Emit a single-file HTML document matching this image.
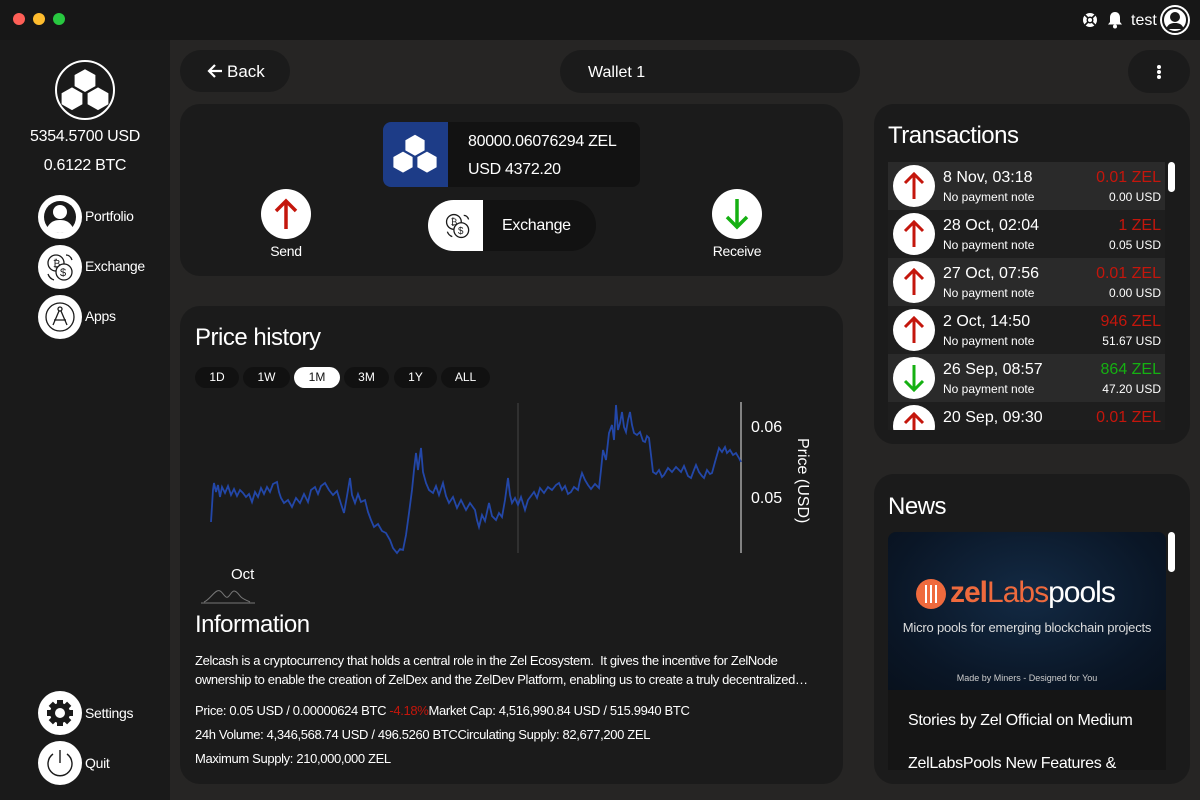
<!DOCTYPE html>
<html><head><meta charset="utf-8"><style>
*{box-sizing:border-box;margin:0;padding:0}
body{width:1200px;height:800px;background:#262524;font-family:"Liberation Sans",Arial,sans-serif;color:#fff;position:relative;overflow:hidden}
.abs{position:absolute}
.card{position:absolute;background:#1b1b1b;border-radius:20px}
.circ{position:absolute;border-radius:50%;background:#fff}
.t14{font-size:14px;letter-spacing:-0.3px}
.info{font-size:13px;letter-spacing:-0.35px;white-space:nowrap}
</style></head><body>
<!-- titlebar -->
<div class="abs" style="left:0;top:0;width:1200px;height:40px;background:#171717"></div>
<div class="circ" style="left:13px;top:13px;width:12px;height:12px;background:#fe5f57"></div>
<div class="circ" style="left:33px;top:13px;width:12px;height:12px;background:#febc2e"></div>
<div class="circ" style="left:53px;top:13px;width:12px;height:12px;background:#28c840"></div>
<svg class="abs" style="left:1082px;top:12px" width="16" height="16" viewBox="0 0 16 16"><circle cx="8" cy="8" r="7" fill="#fff"/><circle cx="8" cy="8" r="3.5" fill="#171717"/><circle cx="8" cy="8" r="2" fill="#fff"/><path d="M3 3l3 3M13 3l-3 3M3 13l3-3M13 13l-3-3" stroke="#171717" stroke-width="1.6"/></svg>
<svg class="abs" style="left:1107px;top:11px" width="16" height="18" viewBox="0 0 16 18"><path d="M8 1c-3 0-5 2.3-5 5.5V11L1 13.5h14L13 11V6.5C13 3.3 11 1 8 1z" fill="#fff"/><circle cx="8" cy="15.5" r="2" fill="#fff"/></svg>
<div class="abs" style="left:1131px;top:12px;font-size:16px">test</div>
<svg class="abs" style="left:1160px;top:5px" width="30" height="30" viewBox="0 0 30 30"><circle cx="15" cy="15" r="15" fill="#fff"/><circle cx="15" cy="15" r="12" fill="none" stroke="#171717" stroke-width="2"/><circle cx="15" cy="12" r="5" fill="#171717"/><path d="M6 24c2-5 5-6 9-6s7 1 9 6" fill="#171717"/></svg>

<!-- sidebar -->
<div class="abs" style="left:0;top:40px;width:170px;height:760px;background:#1a1a1a"></div>
<svg class="abs" style="left:55px;top:60px" width="60" height="60" viewBox="0 0 60 60"><circle cx="30" cy="30" r="29" fill="#1a1a1a" stroke="#fff" stroke-width="2"/>
<g fill="#fff" transform="translate(30 30) scale(1.3) translate(-30 -29)"><polygon points="30,13 38,17.5 38,26 30,30.5 22,26 22,17.5"/><polygon points="20,27 28,31.5 28,40 20,44.5 12,40 12,31.5"/><polygon points="40,27 48,31.5 48,40 40,44.5 32,40 32,31.5"/></g></svg>
<div class="abs" style="left:0;width:170px;top:128px;text-align:center;font-size:16px;letter-spacing:-0.3px">5354.5700 USD</div>
<div class="abs" style="left:0;width:170px;top:157px;text-align:center;font-size:16px;letter-spacing:-0.3px">0.6122 BTC</div>

<svg class="abs" style="left:38px;top:195px" width="44" height="44" viewBox="0 0 44 44"><circle cx="22" cy="22" r="22" fill="#fff"/><circle cx="22" cy="22" r="16" fill="#1a1a1a"/><circle cx="22" cy="17" r="7" fill="#fff"/><path d="M9 33c3-6 7-8 13-8s10 2 13 8c-3 3-8 5-13 5s-10-2-13-5z" fill="#fff"/></svg>
<div class="abs t14" style="left:85px;top:208px">Portfolio</div>
<svg class="abs" style="left:38px;top:245px" width="44" height="44" viewBox="0 0 44 44"><circle cx="22" cy="22" r="22" fill="#fff"/><g fill="none" stroke="#1a1a1a" stroke-width="1.3"><circle cx="18" cy="18" r="8"/><circle cx="26" cy="27" r="8" fill="#fff"/><path d="M28 10c3 0 5 2 6 5M10 29c1 3 3 5 6 6"/></g><text x="15" y="22" font-size="10" fill="#1a1a1a" font-family="Liberation Sans">₿</text><text x="22" y="31" font-size="11" fill="#1a1a1a" font-family="Liberation Sans">$</text></svg>
<div class="abs t14" style="left:85px;top:258px">Exchange</div>
<svg class="abs" style="left:38px;top:295px" width="44" height="44" viewBox="0 0 44 44"><circle cx="22" cy="22" r="22" fill="#fff"/><circle cx="22" cy="22" r="14" fill="none" stroke="#1a1a1a" stroke-width="1.3"/><g stroke="#1a1a1a" stroke-width="1.3" fill="none"><circle cx="22" cy="14" r="2"/><path d="M21 16l-6 14M23 16l6 14M16 25h12"/></g></svg>
<div class="abs t14" style="left:85px;top:308px">Apps</div>

<svg class="abs" style="left:38px;top:691px" width="44" height="44" viewBox="0 0 44 44"><circle cx="22" cy="22" r="22" fill="#fff"/><g fill="#1a1a1a"><circle cx="22" cy="22" r="10"/><g id="tt"><rect x="19" y="9" width="6" height="6"/><rect x="19" y="29" width="6" height="6"/><rect x="9" y="19" width="6" height="6"/><rect x="29" y="19" width="6" height="6"/></g><use href="#tt" transform="rotate(45 22 22)"/></g><circle cx="22" cy="22" r="5" fill="#fff"/></svg>
<div class="abs t14" style="left:85px;top:705px">Settings</div>
<svg class="abs" style="left:38px;top:741px" width="44" height="44" viewBox="0 0 44 44"><circle cx="22" cy="22" r="22" fill="#fff"/><path d="M15 13a12 12 0 1 0 14 0" fill="none" stroke="#1a1a1a" stroke-width="1.4"/><path d="M22 9v13" stroke="#1a1a1a" stroke-width="1.4"/></svg>
<div class="abs t14" style="left:85px;top:755px">Quit</div>

<!-- top buttons -->
<div class="abs" style="left:180px;top:50px;width:110px;height:42px;border-radius:21px;background:#1b1b1b"></div>
<svg class="abs" style="left:207px;top:64px" width="16" height="14" viewBox="0 0 16 14"><path d="M8 1L2 7l6 6M2 7h13" fill="none" stroke="#fff" stroke-width="2.2"/></svg>
<div class="abs" style="left:227px;top:62px;font-size:17px">Back</div>
<div class="abs" style="left:560px;top:50px;width:300px;height:43px;border-radius:22px;background:#1b1b1b"></div>
<div class="abs" style="left:588px;top:64px;font-size:16px">Wallet 1</div>
<div class="abs" style="left:1128px;top:50px;width:62px;height:43px;border-radius:22px;background:#1b1b1b"></div>
<div class="circ" style="left:1157px;top:65px;width:4px;height:4px"></div>
<div class="circ" style="left:1157px;top:70px;width:4px;height:4px"></div>
<div class="circ" style="left:1157px;top:75px;width:4px;height:4px"></div>

<!-- wallet card -->
<div class="card" style="left:180px;top:104px;width:663px;height:172px"></div>
<div class="abs" style="left:383px;top:122px;width:257px;height:65px;border-radius:8px;background:#121212;overflow:hidden"><div style="width:65px;height:65px;background:#1d3c87"></div></div>
<svg class="abs" style="left:385px;top:124px" width="60" height="60" viewBox="0 0 60 60"><g fill="#fff" transform="translate(30 30) scale(1.2) translate(-30 -29)"><polygon points="30,13 38,17.5 38,26 30,30.5 22,26 22,17.5"/><polygon points="20,27 28,31.5 28,40 20,44.5 12,40 12,31.5"/><polygon points="40,27 48,31.5 48,40 40,44.5 32,40 32,31.5"/></g></svg>
<div class="abs" style="left:468px;top:133px;font-size:16px;letter-spacing:-0.3px">80000.06076294 ZEL</div>
<div class="abs" style="left:468px;top:161px;font-size:16px;letter-spacing:-0.3px">USD 4372.20</div>
<svg class="abs" style="left:261px;top:189px" width="50" height="50" viewBox="0 0 50 50"><circle cx="25" cy="25" r="25" fill="#fff"/><path d="M25 40V12M15 22l10-10 10 10" fill="none" stroke="#c4160c" stroke-width="3.5"/></svg>
<div class="abs t14" style="left:261px;top:243px;width:50px;text-align:center">Send</div>
<div class="abs" style="left:428px;top:200px;width:168px;height:51px;border-radius:26px;background:#121212;overflow:hidden"><div style="width:55px;height:51px;background:#fff"></div></div>
<svg class="abs" style="left:440px;top:208px" width="36" height="36" viewBox="0 0 44 44"><g fill="none" stroke="#1a1a1a" stroke-width="1.6"><circle cx="17" cy="17" r="9"/><circle cx="26" cy="27" r="9" fill="#fff"/><path d="M29 9c3 0 5 2 6 5M9 29c1 3 3 5 6 6"/></g><text x="13" y="21" font-size="11" fill="#1a1a1a" font-family="Liberation Sans">₿</text><text x="22" y="32" font-size="12" fill="#1a1a1a" font-family="Liberation Sans">$</text></svg>
<div class="abs" style="left:502px;top:217px;font-size:16px;letter-spacing:-0.3px">Exchange</div>
<svg class="abs" style="left:712px;top:189px" width="50" height="50" viewBox="0 0 50 50"><circle cx="25" cy="25" r="25" fill="#fff"/><path d="M25 10v28M15 28l10 10 10-10" fill="none" stroke="#15b012" stroke-width="3.5"/></svg>
<div class="abs t14" style="left:700px;top:243px;width:74px;text-align:center">Receive</div>

<!-- price card -->
<div class="card" style="left:180px;top:306px;width:663px;height:478px"></div>
<div class="abs" style="left:195px;top:324px;font-size:24px;letter-spacing:-0.5px">Price history</div>
<div class="abs" style="left:195px;top:367px;width:44px;height:21px;border-radius:11px;background:#111;font-size:12px;text-align:center;line-height:21px">1D</div>
<div class="abs" style="left:243px;top:367px;width:47px;height:21px;border-radius:11px;background:#111;font-size:12px;text-align:center;line-height:21px">1W</div>
<div class="abs" style="left:294px;top:367px;width:46px;height:21px;border-radius:11px;background:#fff;color:#111;font-size:12px;text-align:center;line-height:21px">1M</div>
<div class="abs" style="left:344px;top:367px;width:45px;height:21px;border-radius:11px;background:#111;font-size:12px;text-align:center;line-height:21px">3M</div>
<div class="abs" style="left:394px;top:367px;width:43px;height:21px;border-radius:11px;background:#111;font-size:12px;text-align:center;line-height:21px">1Y</div>
<div class="abs" style="left:441px;top:367px;width:49px;height:21px;border-radius:11px;background:#111;font-size:12px;text-align:center;line-height:21px">ALL</div>
<svg class="abs" style="left:180px;top:390px" width="660" height="220" viewBox="180 390 660 220">
<line x1="518" y1="403" x2="518" y2="553" stroke="#444" stroke-width="1"/>
<line x1="741" y1="402" x2="741" y2="553" stroke="#bbb" stroke-width="1.3"/>
<polyline fill="none" stroke="#2347a8" stroke-width="1.8" points="211,522 213,490 214,483 216,492 218,485 220,497 222,487 225,493 228,486 231,495 234,489 237,496 240,490 243,493 246,497 249,494 252,502 255,492 258,497 261,488 264,494 267,487 270,492 273,484 277,482 279,492 281,498 284,503 288,500 292,507 296,498 300,503 304,494 308,502 311,490 315,487 318,494 321,486 325,483 329,490 333,495 337,491 341,504 344,513 347,496 350,478 352,495 355,503 358,494 361,502 365,500 368,512 371,520 374,527 378,524 382,531 386,533 390,540 393,548 397,553 400,549 403,550 406,535 409,513 412,490 414,470 416,453 418,470 421,448 423,472 426,483 429,490 433,493 436,486 439,495 443,483 446,496 449,503 453,497 457,508 461,500 466,510 470,503 475,510 477,520 479,527 482,515 485,521 489,503 492,516 496,520 499,513 502,517 505,500 508,478 510,495 512,503 515,498 518,505 521,497 525,510 528,500 531,496 534,492 537,498 540,488 544,493 548,487 552,490 556,485 559,483 562,490 565,486 568,494 571,492 574,487 578,490 580,480 582,473 585,480 588,485 591,489 595,484 599,488 601,470 603,450 606,460 609,433 612,425 614,440 616,405 618,430 620,423 622,412 624,427 626,432 628,420 630,412 632,425 634,433 637,435 640,432 643,441 645,442 647,436 649,438 651,455 653,472 656,474 659,470 662,477 664,475 668,468 672,472 676,467 681,472 684,466 688,476 691,478 694,470 696,465 699,472 702,476 704,478 707,470 710,474 712,473 715,462 717,455 719,448 722,452 725,447 727,453 730,450 733,455 736,453 739,458 741,462"/>
<text x="751" y="432" fill="#fff" font-size="16" font-family="Liberation Sans">0.06</text>
<text x="751" y="503" fill="#fff" font-size="16" font-family="Liberation Sans">0.05</text>
<text transform="translate(798,438) rotate(90)" fill="#fff" font-size="16" font-family="Liberation Sans">Price (USD)</text>
<text x="231" y="579" fill="#fff" font-size="15" font-family="Liberation Sans">Oct</text>
<path d="M201 603h54M204 602c5-2 9-9 13-11s6 4 9 6 5-6 8-6 5 4 7 6 5 3 9 5" fill="none" stroke="#777" stroke-width="1"/>
</svg>
<div class="abs" style="left:195px;top:611px;font-size:24px;letter-spacing:-0.5px">Information</div>
<div class="abs info" style="left:195px;top:653px">Zelcash is a cryptocurrency that holds a central role in the Zel Ecosystem.&nbsp; It gives the incentive for ZelNode</div>
<div class="abs info" style="left:195px;top:672px">ownership to enable the creation of ZelDex and the ZelDev Platform, enabling us to create a truly decentralized…</div>
<div class="abs info" style="left:195px;top:703px">Price: 0.05 USD / 0.00000624 BTC <span style="color:#c4160c">-4.18%</span>Market Cap: 4,516,990.84 USD / 515.9940 BTC</div>
<div class="abs info" style="left:195px;top:727px">24h Volume: 4,346,568.74 USD / 496.5260 BTCCirculating Supply: 82,677,200 ZEL</div>
<div class="abs info" style="left:195px;top:751px">Maximum Supply: 210,000,000 ZEL</div>

<!-- transactions -->
<div class="card" style="left:874px;top:104px;width:316px;height:340px"></div>
<div class="abs" style="left:888px;top:122px;font-size:24px;letter-spacing:-0.5px">Transactions</div>
<div class="abs" style="left:888px;top:162px;width:277px;height:268px;overflow:hidden">
<div style="position:relative;height:48px;background:#2a2a2a"></div>
<div style="position:relative;height:48px;background:#1e1e1e"></div>
<div style="position:relative;height:48px;background:#2a2a2a"></div>
<div style="position:relative;height:48px;background:#1e1e1e"></div>
<div style="position:relative;height:48px;background:#2a2a2a"></div>
<div style="position:relative;height:48px;background:#1e1e1e"></div>
</div>
<div class="abs" style="left:1168px;top:162px;width:7px;height:30px;border-radius:4px;background:#fff"></div>
<svg class="abs" style="left:888px;top:162px" width="280" height="268" viewBox="0 0 280 268" font-family="Liberation Sans">
<defs><g id="up"><circle r="21" fill="#fff"/><path d="M0 13V-12M-9 -3L0 -12 9 -3" fill="none" stroke="#c4160c" stroke-width="3"/></g>
<g id="dn"><circle r="21" fill="#fff"/><path d="M0 -13V12M-9 3L0 12 9 3" fill="none" stroke="#15b012" stroke-width="3"/></g></defs>
<use href="#up" x="26" y="24"/><use href="#up" x="26" y="72"/><use href="#up" x="26" y="120"/><use href="#up" x="26" y="168"/><use href="#dn" x="26" y="216"/><use href="#up" x="26" y="264"/>
<g fill="#fff" font-size="16"><text x="55" y="20">8 Nov, 03:18</text><text x="55" y="68">28 Oct, 02:04</text><text x="55" y="116">27 Oct, 07:56</text><text x="55" y="164">2 Oct, 14:50</text><text x="55" y="212">26 Sep, 08:57</text><text x="55" y="260">20 Sep, 09:30</text></g>
<g fill="#fff" font-size="12"><text x="55" y="39">No payment note</text><text x="55" y="87">No payment note</text><text x="55" y="135">No payment note</text><text x="55" y="183">No payment note</text><text x="55" y="231">No payment note</text></g>
<g font-size="16" text-anchor="end" fill="#c4160c"><text x="273" y="20">0.01 ZEL</text><text x="273" y="68">1 ZEL</text><text x="273" y="116">0.01 ZEL</text><text x="273" y="164">946 ZEL</text><text x="273" y="212" fill="#15b012">864 ZEL</text><text x="273" y="260">0.01 ZEL</text></g>
<g font-size="12" text-anchor="end" fill="#fff"><text x="273" y="39">0.00 USD</text><text x="273" y="87">0.05 USD</text><text x="273" y="135">0.00 USD</text><text x="273" y="183">51.67 USD</text><text x="273" y="231">47.20 USD</text></g>
</svg>

<!-- news -->
<div class="card" style="left:874px;top:474px;width:316px;height:310px"></div>
<div class="abs" style="left:888px;top:493px;font-size:24px;letter-spacing:-0.5px">News</div>
<div class="abs" style="left:888px;top:532px;width:278px;height:238px;background:#151515;border-radius:8px 8px 0 0;overflow:hidden">
<div style="height:158px;background:radial-gradient(ellipse at 50% 40%,#132a44,#0a1626 70%,#08111d)"></div>
</div>
<div class="circ" style="left:916px;top:579px;width:30px;height:30px;background:#ef6a3d"></div>
<div class="abs" style="left:925px;top:585px;width:2px;height:18px;background:#fff"></div>
<div class="abs" style="left:930px;top:585px;width:2px;height:18px;background:#fff"></div>
<div class="abs" style="left:935px;top:585px;width:2px;height:18px;background:#fff"></div>
<div class="abs" style="left:950px;top:576px;font-size:30px;letter-spacing:-1px"><b style="color:#ef6a3d">zel</b><span style="color:#ef6a3d">Labs</span><span style="color:#fff">pools</span></div>
<div class="abs" style="left:888px;top:620px;width:278px;text-align:center;font-size:13px;color:#ddd;letter-spacing:-0.2px">Micro pools for emerging blockchain projects</div>
<div class="abs" style="left:888px;top:673px;width:278px;text-align:center;font-size:9px;color:#ccc">Made by Miners - Designed for You</div>
<div class="abs" style="left:1168px;top:532px;width:7px;height:40px;border-radius:4px;background:#fff"></div>
<div class="abs" style="left:908px;top:712px;font-size:16px;letter-spacing:-0.3px">Stories by Zel Official on Medium</div>
<div class="abs" style="left:888px;top:750px;width:278px;height:20px;overflow:hidden"><div style="padding-left:20px;padding-top:5px;font-size:16px;letter-spacing:-0.3px">ZelLabsPools New Features &amp;</div></div>
</body></html>
